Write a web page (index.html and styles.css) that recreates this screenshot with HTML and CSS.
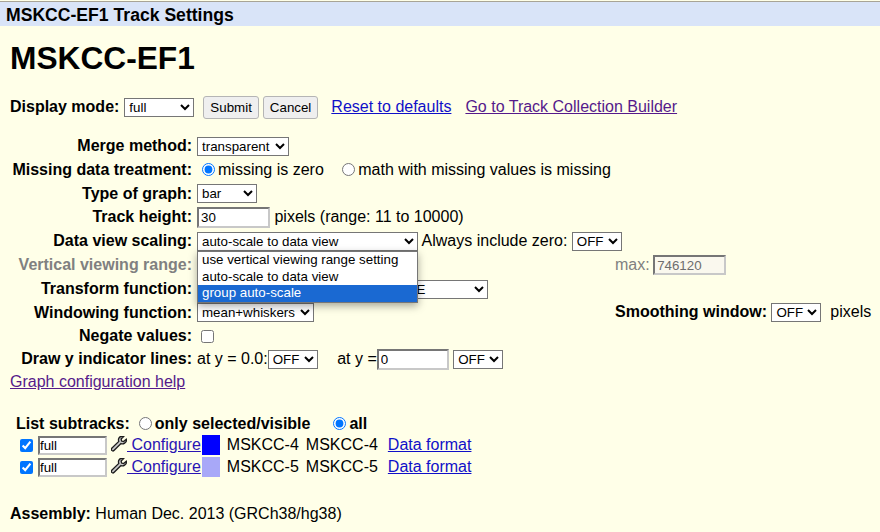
FILE: index.html
```html
<!DOCTYPE html>
<html lang="en">

<head>
    <meta charset="UTF-8">
    <title>MSKCC-EF1 Track Settings</title>
    <link rel="stylesheet" href="styles.css">
</head>

<body>

    <div class="title-bar">MSKCC-EF1 Track Settings</div>

    <div class="content">
        <h1>MSKCC-EF1</h1>

        <div class="display-line">
            <b>Display mode:</b>
            <select class="select-display"><option>full</option></select>
            <button class="btn btn-submit">Submit</button>
            <button class="btn">Cancel</button>
            <a class="link link-reset" href="#">Reset to defaults</a>
            <a class="link link-visited link-builder" href="#">Go to Track Collection Builder</a>
        </div>

        <div class="settings">
            <div class="row">
                <label class="row-label">Merge method:</label>
                <div class="row-main"><select class="select-merge"><option>transparent</option></select></div>
            </div>
            <div class="row">
                <label class="row-label">Missing data treatment:</label>
                <div class="row-main">
                    <input type="radio" name="missing" class="radio" checked>missing is zero
                    <input type="radio" name="missing" class="radio radio-second">math with missing values is missing
                </div>
            </div>
            <div class="row row-short">
                <label class="row-label">Type of graph:</label>
                <div class="row-main"><select class="select-graph"><option>bar</option></select></div>
            </div>
            <div class="row">
                <label class="row-label">Track height:</label>
                <div class="row-main"><input type="text" class="field field-height" value="30"> pixels (range: 11 to 10000)</div>
            </div>
            <div class="row">
                <label class="row-label">Data view scaling:</label>
                <div class="row-main">
                    <select class="select-scaling"><option>auto-scale to data view</option></select>
                    Always include zero:
                    <select class="select-off"><option>OFF</option></select>
                </div>

                <ul class="dropdown">
                    <li>use vertical viewing range setting</li>
                    <li>auto-scale to data view</li>
                    <li class="dropdown-active">group auto-scale</li>
                </ul>
            </div>
            <div class="row row-disabled">
                <label class="row-label">Vertical viewing range:</label>
                <div class="row-main"></div>
                <span class="far">max: <input type="text" class="field field-max" value="746120" disabled></span>
            </div>
            <div class="row">
                <label class="row-label">Transform function:</label>
                <div class="row-main"><select class="select-transform"><option>NONE</option></select></div>
            </div>
            <div class="row row-short">
                <label class="row-label">Windowing function:</label>
                <div class="row-main"><select class="select-window"><option>mean+whiskers</option></select></div>
                <span class="far"><b>Smoothing window:</b> <select class="select-off"><option>OFF</option></select> &nbsp;pixels</span>
            </div>
            <div class="row row-short">
                <label class="row-label">Negate values:</label>
                <div class="row-main"><input type="checkbox" class="check-negate"></div>
            </div>
            <div class="row">
                <label class="row-label">Draw y indicator lines:</label>
                <div class="row-main">
                    at y = 0.0:<select class="select-off"><option>OFF</option></select>
                    <span class="at-y">at y =</span><input type="text" class="field field-y" value="0">
                    <select class="select-off"><option>OFF</option></select>
                </div>
            </div>
        </div>

        <a class="link link-visited link-help" href="#">Graph configuration help</a>

        <div class="subtracks">
            <div class="subtracks-head">
                <b>List subtracks:</b>
                <input type="radio" name="list" class="radio radio-list"><b>only selected/visible</b>
                <input type="radio" name="list" class="radio radio-all" checked><b>all</b>
            </div>

            <div class="subtrack">
                <input type="checkbox" class="check" checked>
                <input type="text" class="field field-sub" value="full">
                <svg class="wrench" viewBox="0 0 16 16"><path d="M15.300 3.200l-2.700 2.400-2-.6-.5-2L12.700.6C10.800-.1 8.700.6 7.900 2.100 7.300 3.200 7.400 4.400 7.800 5.400L1 12c-.8.800-.8 1.700-.2 2.400.7.700 1.600.7 2.400-.1l6.800-6.700c1.200.4 2.500.3 3.600-.5 1.500-1 2.100-2.800 1.700-3.900z" fill="#c8c8c8" stroke="#1c1c1c" stroke-width="1.300"/></svg>
                <a class="link link-config" href="#">&nbsp;Configure</a>
                <span class="swatch swatch-blue"></span>
                <span class="sub-name">MSKCC-4</span>
                <span class="sub-desc">MSKCC-4</span>
                <a class="link" href="#">Data format</a>
            </div>
            <div class="subtrack">
                <input type="checkbox" class="check" checked>
                <input type="text" class="field field-sub" value="full">
                <svg class="wrench" viewBox="0 0 16 16"><path d="M15.300 3.200l-2.700 2.400-2-.6-.5-2L12.700.6C10.800-.1 8.700.6 7.900 2.100 7.300 3.200 7.400 4.400 7.800 5.400L1 12c-.8.800-.8 1.700-.2 2.400.7.700 1.600.7 2.400-.1l6.800-6.700c1.200.4 2.500.3 3.600-.5 1.500-1 2.100-2.800 1.700-3.900z" fill="#c8c8c8" stroke="#1c1c1c" stroke-width="1.300"/></svg>
                <a class="link link-config" href="#">&nbsp;Configure</a>
                <span class="swatch swatch-light"></span>
                <span class="sub-name">MSKCC-5</span>
                <span class="sub-desc">MSKCC-5</span>
                <a class="link" href="#">Data format</a>
            </div>
        </div>

        <p class="assembly"><b>Assembly:</b> Human Dec. 2013 (GRCh38/hg38)</p>
    </div>

</body>

</html>
```

FILE: styles.css
```css
html,
body {
    height: 100%;
}

body {
    margin: 0;
    overflow: hidden;
    font-family: 'Liberation Sans', Arial, sans-serif;
    font-size: 16px;
    color: #000;
    background-color: #ffffe8;
}

.title-bar {
    height: 24px;
    margin-top: 1px;
    padding-left: 6px;
    border-top: 1px solid #a8a496;
    background-color: #d9e4f8;
    font-size: 17.6px;
    font-weight: bold;
    line-height: 26px;
}

.content {
    padding-left: 10px;
}

h1 {
    margin: 0;
    padding-top: 14px;
    font-size: 31.7px;
    line-height: 37px;
}

select {
    height: 19px;
    padding: 0;
    border: 1px solid #767676;
    border-radius: 0;
    background-color: #fff;
    font-family: 'Liberation Sans', Arial, sans-serif;
    font-size: 13.33px;
    color: #000;
}

.display-line {
    display: flex;
    align-items: center;
    height: 24px;
    margin-top: 18px;
}

.select-display {
    width: 70px;
    margin-left: 5px;
}

.btn {
    height: 23px;
    margin-left: 4px;
    padding: 1px 6px;
    border: 1px solid #b5b5b5;
    border-radius: 3px;
    background-color: #efefef;
    font-family: 'Liberation Sans', Arial, sans-serif;
    font-size: 13.33px;
    color: #000;
}

.btn-submit {
    margin-left: 9px;
}

.link {
    color: #1010c8;
    text-decoration: underline;
}

.link-visited {
    color: #551a8b;
}

.link-config {
    color: #2a14b4;
}

.link-reset {
    margin-left: 13px;
}

.link-builder {
    margin-left: 14px;
}

.settings {
    margin-top: 15px;
}

.row {
    position: relative;
    display: flex;
    align-items: center;
    height: 24px;
}

.row-short {
    height: 23px;
}

.row-label {
    flex: none;
    width: 182px;
    font-weight: bold;
    text-align: right;
}

.row-main {
    flex: none;
    width: 418px;
    padding-left: 5px;
    white-space: nowrap;
}

.far {
    white-space: nowrap;
}

.row-disabled,
.row-disabled .row-label {
    color: #808080;
}

.radio {
    width: 13px;
    height: 13px;
    margin: 0 3px 0 5px;
    vertical-align: -1px;
}

.radio-second {
    margin-left: 14px;
}

.select-merge {
    width: 92px;
}

.select-graph {
    width: 60px;
}

.select-scaling {
    width: 221px;
}

.select-off {
    width: 50px;
}

.select-transform {
    width: 106px;
    margin-left: 185px;
}

.select-window {
    width: 117px;
}

.field {
    box-sizing: border-box;
    padding: 1px 2px;
    border-width: 2px;
    border-style: solid;
    border-color: #767676 #c8c8c8 #c8c8c8 #767676;
    background-color: #fff;
    font-family: 'Liberation Sans', Arial, sans-serif;
    font-size: 13.33px;
    color: #000;
}

.field-height {
    width: 73px;
    height: 21px;
}

.field-max {
    width: 73px;
    height: 20px;
    margin-left: -1px;
    background-color: #faf8ee;
    color: #6d6d6d;
}

.field-y {
    width: 72px;
    height: 21px;
}

.field-sub {
    width: 69px;
    height: 19px;
    margin: 0 0 0 5px;
    padding-left: 0;
}

.check-negate {
    width: 13px;
    height: 13px;
    margin: 0 0 0 4px;
    vertical-align: -2px;
}

.at-y {
    margin-left: 15px;
}

.dropdown {
    position: absolute;
    top: 22px;
    left: 187px;
    z-index: 2;
    width: 219px;
    margin: 0;
    padding: 0;
    border: 1px solid #767676;
    background-color: #fff;
    box-shadow: 0 3px 8px rgba(0, 0, 0, 0.35);
    font-size: 13.33px;
    list-style: none;
}

.dropdown li {
    height: 16.5px;
    padding-left: 4px;
    line-height: 16.5px;
}

.dropdown-active {
    background-color: #1a69d2;
    color: #fff;
}

.link-help {
    display: block;
    margin-top: 2px;
    line-height: 18px;
}

.subtracks {
    margin: 22px 0 0 6px;
}

.subtracks-head {
    display: flex;
    align-items: center;
    height: 21px;
}

.radio-list {
    margin-left: 9px;
}

.radio-all {
    margin-left: 23px;
}

.subtrack {
    display: flex;
    align-items: center;
    height: 22px;
}

.check {
    width: 13px;
    height: 13px;
    margin: 0 0 0 4px;
}

.wrench {
    width: 16px;
    height: 16px;
    margin: 0 0 3px 4px;
}

.swatch {
    width: 18px;
    height: 20px;
    margin-left: 1px;
}

.swatch-blue {
    background-color: #0000ff;
}

.swatch-light {
    background-color: #a8a8f8;
}

.sub-name {
    margin-left: 7px;
}

.sub-desc {
    margin-left: 7px;
    margin-right: 10px;
}

.assembly {
    margin: 27px 0 0;
}
```
